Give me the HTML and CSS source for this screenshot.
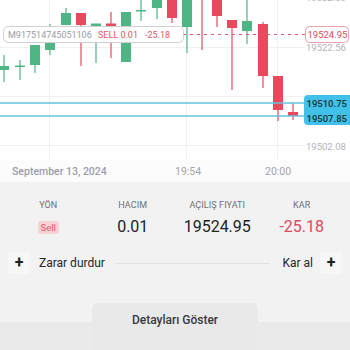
FILE: index.html
```html
<!DOCTYPE html>
<html lang="tr">
<head>
<meta charset="utf-8">
<link rel="stylesheet" href="styles.css">
</head>
<body>
<div class="chart">
  <svg class="chart-svg" width="350" height="182" viewBox="0 0 350 182" xmlns="http://www.w3.org/2000/svg">
    <rect x="0" y="0" width="350" height="182" fill="#ffffff"/>
    <rect x="0" y="160" width="350" height="22" fill="#fcfcfd"/>
    <!-- grid -->
    <g stroke="#f0f0f2" stroke-width="1">
      <line x1="0" y1="47.5" x2="305" y2="47.5"/>
      <line x1="0" y1="96.5" x2="305" y2="96.5"/>
      <line x1="0" y1="145.5" x2="305" y2="145.5"/>
      <line x1="49.5" y1="0" x2="49.5" y2="160"/>
      <line x1="186.5" y1="0" x2="186.5" y2="160"/>
      <line x1="277.5" y1="0" x2="277.5" y2="160"/>
    </g>
    <!-- candles -->
    <g class="green" fill="#4fb584" stroke="#4fb584" stroke-width="1.2">
      <line x1="4" y1="55" x2="4" y2="82"/><rect x="-1" y="66" width="10" height="4" stroke="none"/>
      <line x1="20" y1="60" x2="20" y2="80"/><rect x="15" y="65.5" width="10" height="1.5" stroke="none"/>
      <line x1="35" y1="45" x2="35" y2="73"/><rect x="30" y="45" width="10" height="20" stroke="none"/>
      <line x1="50" y1="24" x2="50" y2="55"/><rect x="45" y="43" width="10" height="7" stroke="none"/>
      <line x1="66" y1="8" x2="66" y2="25"/><rect x="61" y="13" width="10" height="12" stroke="none"/>
      <line x1="96" y1="24" x2="96" y2="63"/><rect x="91" y="23.5" width="10" height="2.5" stroke="none"/>
      <line x1="126" y1="12" x2="126" y2="62"/><rect x="121" y="12" width="10" height="50" stroke="none"/>
      <line x1="141" y1="0" x2="141" y2="21"/><rect x="136" y="10" width="10" height="1.5" stroke="none"/>
      <line x1="157" y1="0" x2="157" y2="19"/><rect x="152" y="-2" width="10" height="10" stroke="none"/>
      <line x1="187" y1="0" x2="187" y2="53"/><rect x="182" y="-2" width="10" height="29" stroke="none"/>
      <line x1="247" y1="0" x2="247" y2="44"/><rect x="242" y="21" width="10" height="10" stroke="none"/>
    </g>
    <g class="red" fill="#e9495d" stroke="#e9495d" stroke-width="1.2">
      <line x1="81" y1="13" x2="81" y2="66"/><rect x="76" y="13" width="10" height="12" stroke="none"/>
      <line x1="111" y1="12" x2="111" y2="58"/><rect x="106" y="23.5" width="10" height="2.5" stroke="none"/>
      <line x1="172" y1="0" x2="172" y2="23"/><rect x="167" y="-2" width="10" height="20" stroke="none"/>
      <line x1="202" y1="0" x2="202" y2="50"/>
      <line x1="217" y1="0" x2="217" y2="27"/><rect x="212" y="-2" width="10" height="18" stroke="none"/>
      <line x1="232" y1="20" x2="232" y2="90"/><rect x="227" y="20" width="10" height="8" stroke="none"/>
      <line x1="263" y1="22" x2="263" y2="88"/><rect x="258" y="24" width="10" height="52" stroke="none"/>
      <line x1="278" y1="76" x2="278" y2="121"/><rect x="273" y="76" width="10" height="34" stroke="none"/>
      <line x1="293" y1="103" x2="293" y2="120"/><rect x="288" y="112" width="10" height="4" stroke="none"/>
    </g>
    <!-- price axis labels -->
    <g class="axis-text" fill="#b3b3bb" font-size="9.5">
      <text x="306" y="1">19532.60</text>
      <text x="306" y="50.5">19522.56</text>
      <text x="306" y="149.5">19502.08</text>
    </g>
    <!-- position lines -->
    <line x1="0" y1="103" x2="305" y2="103" stroke="#62c4dc" stroke-width="1.3"/>
    <line x1="0" y1="116" x2="305" y2="116" stroke="#62c4dc" stroke-width="1.3"/>
    <line x1="183" y1="34.5" x2="305" y2="34.5" stroke="#e2596b" stroke-width="1" stroke-dasharray="3 4"/>
    <!-- order label -->
    <rect x="3.5" y="26.5" width="180" height="16" rx="5" fill="#ffffff" fill-opacity="0.92" stroke="#cfcfd4"/>
    <text y="38" font-size="9"><tspan x="8" fill="#9a9aa4">M917514745051106</tspan><tspan x="98" fill="#e2566a">SELL 0.01</tspan><tspan x="145" fill="#e2566a">-25.18</tspan></text>
    <!-- price tags -->
    <rect x="305.5" y="26.5" width="43" height="16" rx="4" fill="#ffffff" stroke="#e6a3ad"/>
    <text x="307.5" y="38" font-size="9.5" fill="#e0485c">19524.95</text>
    <path d="M308 95 H350 V125 H308 Q304 125 304 121 V99 Q304 95 308 95 Z" fill="#41c1ea"/>
    <text x="306.5" y="107" font-size="9.5" fill="#12333f" font-weight="500">19510.75</text>
    <text x="306.5" y="122" font-size="9.5" fill="#12333f" font-weight="500">19507.85</text>
    <!-- time axis -->
    <text x="12" y="175" font-size="10.5" font-weight="500" fill="#9c9cab">September 13, 2024</text>
    <text x="175" y="175" font-size="10.5" fill="#a3a3b0">19:54</text>
    <text x="265" y="175" font-size="10.5" fill="#a3a3b0">20:00</text>
  </svg>
</div>
<div class="panel">
  <div class="stats">
    <div class="stat">
      <span class="stat-label">YÖN</span>
      <span class="badge-sell">Sell</span>
    </div>
    <div class="stat">
      <span class="stat-label">HACIM</span>
      <span class="stat-value">0.01</span>
    </div>
    <div class="stat">
      <span class="stat-label">AÇILIŞ FIYATI</span>
      <span class="stat-value">19524.95</span>
    </div>
    <div class="stat">
      <span class="stat-label">KAR</span>
      <span class="stat-value loss">-25.18</span>
    </div>
  </div>
  <div class="sltp">
    <button class="plus-btn">+</button>
    <span class="sltp-text">Zarar durdur</span>
    <span class="sltp-line"></span>
    <span class="sltp-text">Kar al</span>
    <button class="plus-btn">+</button>
  </div>
  <div class="footer">
    <button class="details-btn">Detayları Göster</button>
  </div>
</div>
</body>
</html>
```

FILE: styles.css
```css
* { box-sizing: border-box; }
html, body {
  margin: 0;
  padding: 0;
  width: 350px;
  height: 350px;
  overflow: hidden;
  background: #f2f2f3;
  font-family: Roboto, "Noto Sans", sans-serif;
}
.chart {
  height: 182px;
  background: #ffffff;
}
.chart-svg {
  display: block;
  font-family: Roboto, "Noto Sans", sans-serif;
}
.panel {
  height: 168px;
  display: flex;
  flex-direction: column;
  background: #f2f2f3;
}
.stats {
  display: grid;
  grid-template-columns: repeat(4, 1fr);
  padding: 17px 6px 0;
}
.stat {
  display: flex;
  flex-direction: column;
  align-items: center;
}
.stat-label {
  font-size: 9px;
  line-height: 12px;
  color: #6f6f74;
  letter-spacing: 0.1px;
}
.stat-value {
  margin-top: 6px;
  font-size: 16px;
  line-height: 20px;
  color: #222226;
}
.stat-value.loss { color: #e0485c; }
.badge-sell {
  margin-top: 10px;
  font-size: 9.5px;
  line-height: 13px;
  padding: 0 3px;
  border-radius: 2px;
  background: #f9d2d7;
  color: #e2566a;
}
.sltp {
  margin-top: 15px;
  display: flex;
  align-items: center;
  padding: 0 8px;
  height: 22px;
}
.plus-btn {
  width: 22px;
  height: 22px;
  border: none;
  padding: 0;
  border-radius: 2px;
  background: #f7f7f8;
  color: #1f1f22;
  font-family: Roboto, sans-serif;
  font-size: 16px;
  font-weight: 700;
  line-height: 22px;
  text-align: center;
}
.sltp-text {
  font-size: 12px;
  color: #262629;
  margin: 0 9px;
}
.sltp-text:last-of-type { margin: 0 7px 0 0; }
.sltp-line {
  flex: 1;
  height: 1px;
  background: #e2e2e4;
  margin: 0 12px 0 1px;
}
.footer {
  margin-top: 29px;
  height: 47px;
  display: flex;
  justify-content: center;
  background: linear-gradient(to bottom, transparent 19px, #eaeaeb 19px);
}
.details-btn {
  width: 166px;
  height: 47px;
  border: none;
  border-radius: 6px 6px 0 0;
  background: #e9e9ea;
  padding: 9px 0 0;
  font-family: Roboto, sans-serif;
  font-size: 12px;
  font-weight: 500;
  line-height: 16px;
  color: #3a3a3e;
  display: flex;
  justify-content: center;
  align-items: flex-start;
}
```
